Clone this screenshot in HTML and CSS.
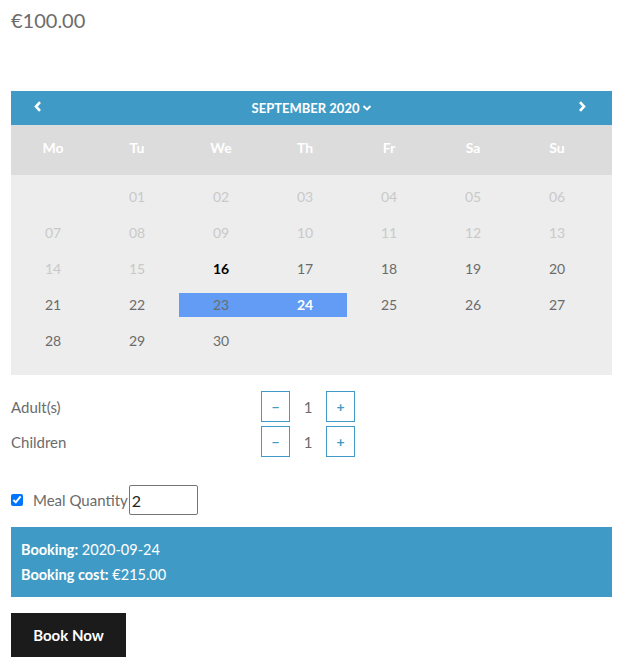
FILE: index.html
```html
<!DOCTYPE html>
<html lang="en">
<head>
    <meta charset="UTF-8">
    <title>Booking</title>
    <link rel="stylesheet" href="styles.css">
</head>
<body>
    <div class="product">
        <p class="price">€100.00</p>

        <div class="calendar">
            <div class="cal-head">
                <svg class="nav" width="8" height="11" viewBox="0 0 8 11"><path d="M6 1.2 L2 5.5 L6 9.8" fill="none" stroke="#fff" stroke-width="2.6"/></svg>
                <span class="month">SEPTEMBER 2020
                    <svg width="10" height="8" viewBox="0 0 10 8"><path d="M1.5 2 L5 5.5 L8.5 2" fill="none" stroke="#fff" stroke-width="1.8"/></svg>
                </span>
                <svg class="nav" width="8" height="11" viewBox="0 0 8 11"><path d="M2 1.2 L6 5.5 L2 9.8" fill="none" stroke="#fff" stroke-width="2.6"/></svg>
            </div>
            <div class="cal-days">
                <span>Mo</span><span>Tu</span><span>We</span><span>Th</span><span>Fr</span><span>Sa</span><span>Su</span>
            </div>
            <div class="cal-dates">
                <span></span>
                <span class="past">01</span><span class="past">02</span><span class="past">03</span><span class="past">04</span><span class="past">05</span><span class="past">06</span>
                <span class="past">07</span><span class="past">08</span><span class="past">09</span><span class="past">10</span><span class="past">11</span><span class="past">12</span><span class="past">13</span>
                <span class="past">14</span><span class="past">15</span><span class="today">16</span><span>17</span><span>18</span><span>19</span><span>20</span>
                <span>21</span><span>22</span><span class="range">23</span><span class="range selected">24</span><span>25</span><span>26</span><span>27</span>
                <span>28</span><span>29</span><span>30</span>
            </div>
        </div>

        <div class="persons">
            <div class="person-row">
                <span class="label">Adult(s)</span>
                <div class="qty">
                    <button class="qty-btn">&minus;</button>
                    <span class="qty-val">1</span>
                    <button class="qty-btn">+</button>
                </div>
            </div>
            <div class="person-row">
                <span class="label">Children</span>
                <div class="qty">
                    <button class="qty-btn">&minus;</button>
                    <span class="qty-val">1</span>
                    <button class="qty-btn">+</button>
                </div>
            </div>
        </div>

        <div class="extra">
            <input type="checkbox" checked>
            <label>Meal Quantity</label>
            <input type="text" class="meal-input" value="2">
        </div>

        <div class="summary">
            <p><strong>Booking:</strong> 2020-09-24</p>
            <p><strong>Booking cost:</strong> €215.00</p>
        </div>

        <button class="book-btn">Book Now</button>
    </div>
</body>
</html>
```

FILE: styles.css
```css
body {
    margin: 0;
    padding: 0 10px 0 11px;
    font-family: Lato, "Noto Sans", sans-serif;
    color: #6d6d6d;
    background: #ffffff;
}

.product {
    width: 601px;
}

.price {
    margin: 0;
    padding-top: 7px;
    font-size: 20px;
    line-height: 26px;
    color: #6b6b6b;
}

.calendar {
    margin-top: 58px;
}

.cal-head {
    display: flex;
    justify-content: space-between;
    align-items: center;
    height: 34px;
    padding: 0 26px 0 23px;
    background: #3f9bc5;
    color: #ffffff;
}

.nav {
    display: block;
    margin-top: -3px;
}

.month {
    font-size: 13px;
    font-weight: 700;
    display: flex;
    align-items: center;
    gap: 3px;
    margin-left: 4px;
}

.cal-days {
    display: grid;
    grid-template-columns: repeat(7, 84px);
    height: 50px;
    box-sizing: border-box;
    padding-bottom: 5px;
    align-items: center;
    background: #dcdcdc;
    color: #ffffff;
    font-size: 14px;
    font-weight: 700;
    text-align: center;
}

.cal-dates {
    display: grid;
    grid-template-columns: repeat(7, 84px);
    grid-auto-rows: 24px;
    row-gap: 12px;
    padding: 10px 0 22px;
    background: #ededed;
    font-size: 14px;
    color: #6b6b6b;
    text-align: center;
}

.cal-dates span {
    line-height: 24px;
}

.cal-dates .past {
    color: #c9c9c9;
}

.cal-dates .today {
    color: #000000;
    font-weight: 700;
}

.cal-dates .range {
    background: #639cf5;
}

.cal-dates .selected {
    color: #ffffff;
    font-weight: 700;
}

.persons {
    margin-top: 16px;
    display: flex;
    flex-direction: column;
    gap: 4px;
}

.person-row {
    display: flex;
    align-items: center;
}

.label {
    width: 250px;
    font-size: 15px;
    color: #6b6b6b;
}

.qty {
    display: flex;
    align-items: center;
}

.qty-btn {
    width: 29px;
    height: 31px;
    padding: 0;
    border: 1px solid #3f9bc5;
    background: #ffffff;
    color: #3f9bc5;
    font-family: inherit;
    font-size: 14px;
    font-weight: 700;
}

.qty-val {
    width: 36px;
    text-align: center;
    font-size: 15px;
    color: #6b6b6b;
}

.extra {
    display: flex;
    align-items: center;
    margin-top: 28px;
    font-size: 15px;
    color: #6b6b6b;
}

.extra input[type="checkbox"] {
    margin: 0 10px 0 0;
    width: 12px;
    height: 12px;
}

.meal-input {
    width: 69px;
    height: 30px;
    box-sizing: border-box;
    margin-left: 1px;
    padding: 0 2px;
    border: 1px solid #767676;
    border-radius: 2px;
    font-family: inherit;
    font-size: 16px;
    color: #222;
}

.summary {
    margin-top: 12px;
    padding: 10px;
    background: #3f9bc5;
    color: #ffffff;
    font-size: 14.5px;
}

.summary p {
    margin: 0;
    line-height: 25px;
}

.book-btn {
    margin-top: 16px;
    width: 115px;
    height: 44px;
    border: none;
    background: #1b1b1b;
    color: #ffffff;
    font-family: inherit;
    font-size: 15px;
    font-weight: 700;
}
```
